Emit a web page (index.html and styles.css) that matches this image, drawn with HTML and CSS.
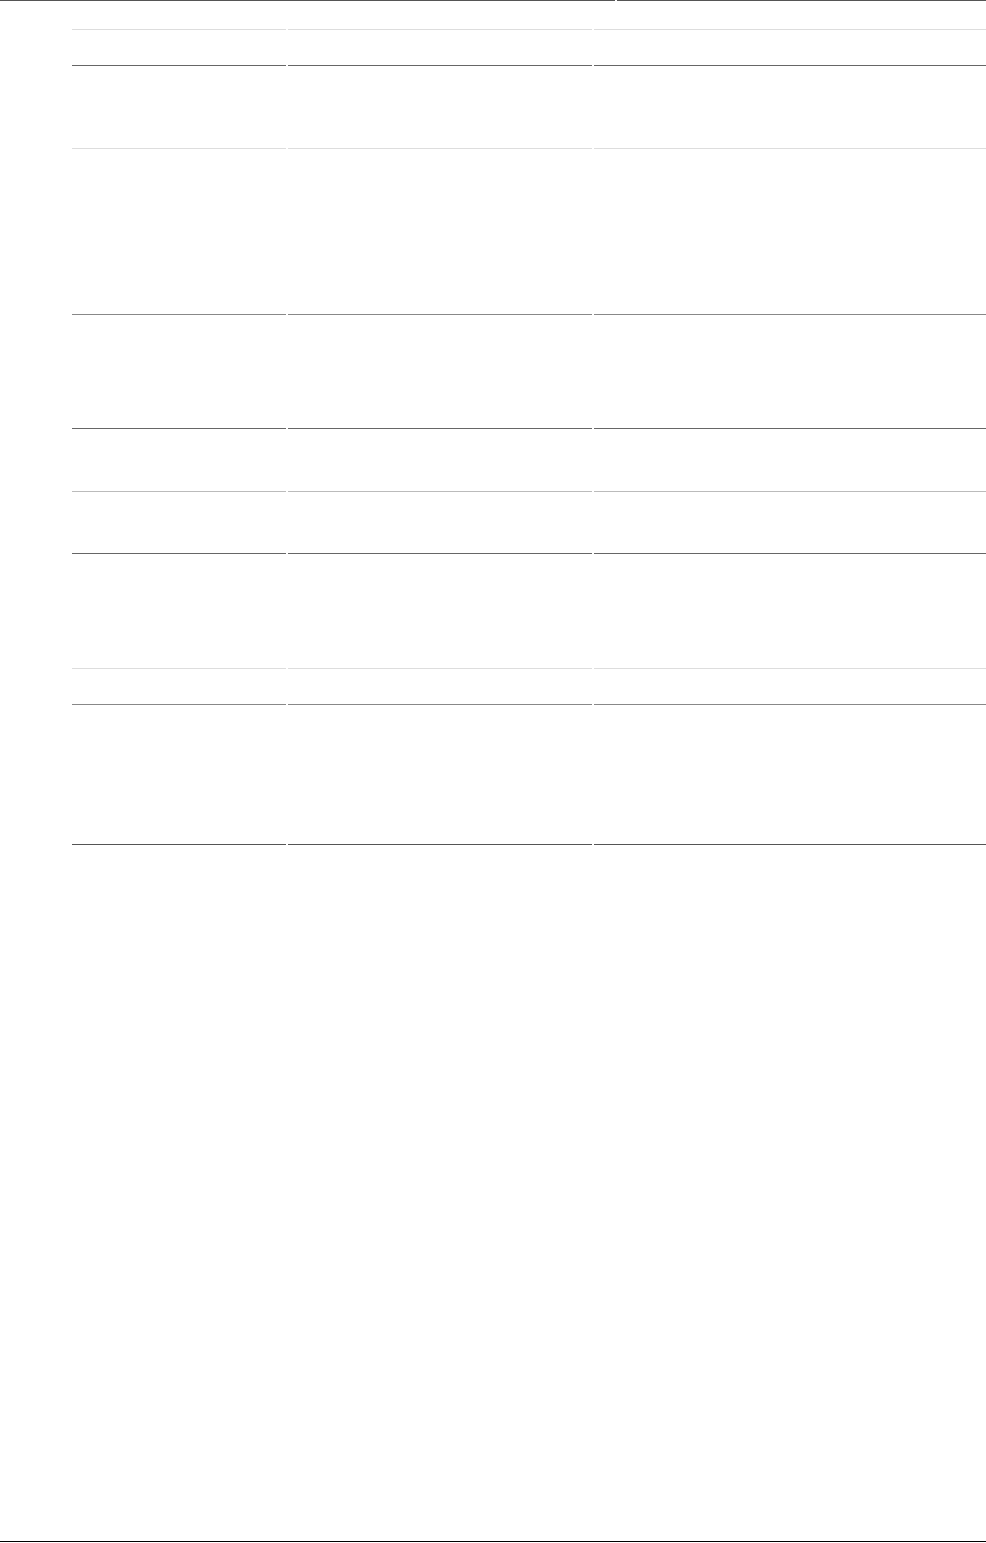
FILE: index.html
```html
<!DOCTYPE html>
<html>

<head>
    <title>Schedule</title>
    <link rel="stylesheet" href="styles.css">
</head>

<body>
    <div class="page">
        <div class="topbar">
            <div class="seg wide"></div>
            <div class="seg rest"></div>
        </div>

        <div class="grid">
            <div class="row light h36"><div></div><div></div><div></div></div>
            <div class="row dark h83"><div></div><div></div><div></div></div>
            <div class="row light h166"><div></div><div></div><div></div></div>
            <div class="row mid h114"><div></div><div></div><div></div></div>
            <div class="row dark h63"><div></div><div></div><div></div></div>
            <div class="row soft h62"><div></div><div></div><div></div></div>
            <div class="row dark h115"><div></div><div></div><div></div></div>
            <div class="row light h36"><div></div><div></div><div></div></div>
            <div class="row mid h140"><div></div><div></div><div></div></div>
            <div class="row darker end"><div></div><div></div><div></div></div>
        </div>

        <div class="footer"></div>
    </div>
</body>

</html>
```

FILE: styles.css
```css
html, body {
    margin: 0;
    padding: 0;
    background-color: #fff;
    font-family: 'Liberation Sans', Arial, sans-serif;
}

.page {
    display: flex;
    flex-direction: column;
    height: 1543px;
    overflow: hidden;
}

.topbar {
    display: flex;
    gap: 2px;
    height: 29px;
}

.seg {
    border-top: 1px solid #555;
}

.seg.wide {
    width: 615px;
}

.seg.rest {
    flex: 1;
}

.grid {
    margin-left: 72px;
}

.row {
    display: grid;
    grid-template-columns: 214px 304px 1fr;
    column-gap: 2px;
}

.row div {
    border-top: 1px solid #ddd;
}

.row.light div { border-top-color: #ddd; }
.row.soft div { border-top-color: #bbb; }
.row.mid div { border-top-color: #888; }
.row.dark div { border-top-color: #666; }
.row.darker div { border-top-color: #555; }

.h36 { height: 36px; }
.h62 { height: 62px; }
.h63 { height: 63px; }
.h83 { height: 83px; }
.h114 { height: 114px; }
.h115 { height: 115px; }
.h140 { height: 140px; }
.h166 { height: 166px; }

.row.end {
    height: 1px;
}

.footer {
    margin-top: auto;
    height: 1px;
    border-top: 1px solid #000;
    margin-bottom: 0;
}
```
